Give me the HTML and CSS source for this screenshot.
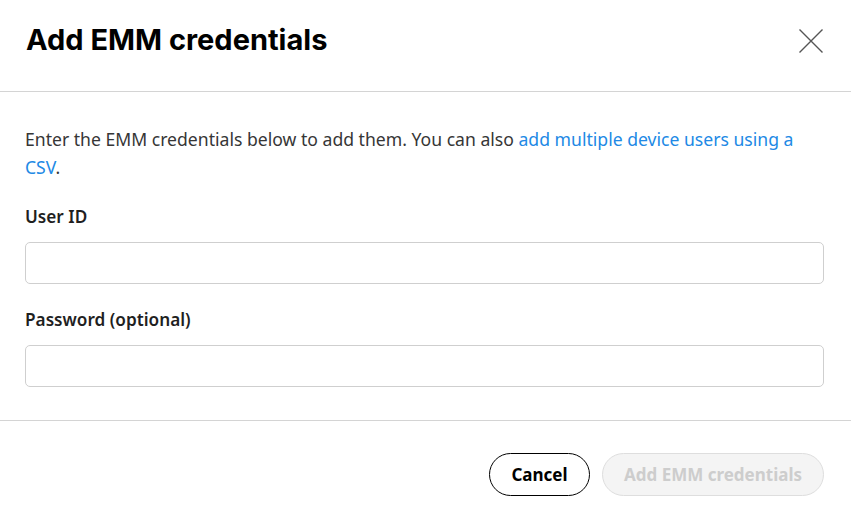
FILE: index.html
```html
<!DOCTYPE html>
<html lang="en">
<head>
<meta charset="utf-8">
<title>Add EMM credentials</title>
<link rel="stylesheet" href="styles.css">
</head>
<body>
<div class="dialog">
  <div class="dialog-header">
    <h1 class="dialog-title">Add EMM credentials</h1>
    <button class="close-btn" aria-label="Close">
      <svg width="24" height="24" viewBox="0 0 24 24"><path d="M0.5 0.5 L23.5 23.5 M23.5 0.5 L0.5 23.5" stroke="#555" stroke-width="1.4" fill="none"/></svg>
    </button>
  </div>
  <div class="dialog-body">
    <p class="intro">Enter the EMM credentials below to add them. You can also <a href="#" class="link">add multiple device users using a CSV</a>.</p>
    <label class="field-label">User ID</label>
    <input class="field-input" type="text">
    <label class="field-label">Password (optional)</label>
    <input class="field-input" type="password">
  </div>
  <div class="dialog-footer">
    <button class="btn btn-outline">Cancel</button>
    <button class="btn btn-disabled" disabled>Add EMM credentials</button>
  </div>
</div>
</body>
</html>
```
FILE: styles.css
```css
html, body {
  margin: 0;
  padding: 0;
  background: #fff;
}
body {
  font-family: "Noto Sans", "Open Sans", sans-serif;
  color: #252525;
}
.dialog {
  width: 851px;
  height: 525px;
  display: flex;
  flex-direction: column;
}
.dialog-header {
  height: 92px;
  box-sizing: border-box;
  border-bottom: 1px solid #d4d4d4;
  display: flex;
  justify-content: space-between;
  align-items: flex-start;
  padding: 22px 28px 0 26px;
}
.dialog-title {
  margin: 0;
  font-family: "Inter", "Lato", sans-serif;
  font-weight: 700;
  font-size: 29px;
  line-height: 36px;
  color: #000;
  letter-spacing: 0;
}
.close-btn {
  border: 0;
  background: none;
  padding: 0;
  margin-top: 7px;
  width: 24px;
  height: 24px;
  cursor: pointer;
}
.dialog-body {
  padding: 33px 27px 0 25px;
  display: flex;
  flex-direction: column;
}
.intro {
  margin: 0 0 22px;
  font-size: 17.6px;
  line-height: 28px;
  color: #363636;
}
.link {
  color: #2189e5;
  text-decoration: none;
}
.field-label {
  font-weight: 600;
  font-size: 17.2px;
  line-height: 28px;
  color: #1f1f1f;
  margin-bottom: 11px;
}
.field-input {
  height: 42px;
  box-sizing: border-box;
  border: 1px solid #cfcfcf;
  border-radius: 5px;
  margin: 0 0 22px;
  font: inherit;
  padding: 0 12px;
}
.field-input:last-child {
  margin-bottom: 0;
}
.dialog-footer {
  margin-top: 33px;
  border-top: 1px solid #d4d4d4;
  padding: 32px 27px 0 0;
  display: flex;
  justify-content: flex-end;
  gap: 12px;
}
.btn {
  height: 43px;
  border-radius: 22px;
  font-family: "Noto Sans", sans-serif;
  font-weight: 700;
  font-size: 17px;
  padding: 0;
  box-sizing: border-box;
}
.btn-outline {
  width: 101px;
  background: #fff;
  border: 1px solid #000;
  color: #000;
}
.btn-disabled {
  width: 222px;
  background: #f4f4f4;
  border: 1px solid #dedede;
  color: #cdcdcd;
}
```
